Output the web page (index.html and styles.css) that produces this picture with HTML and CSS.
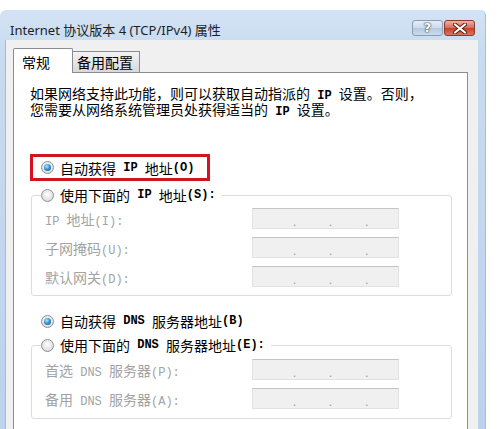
FILE: index.html
```html
<!DOCTYPE html>
<html lang="zh-CN">
  <head>
    <meta charset="UTF-8" />
    <meta name="viewport" content="width=device-width, initial-scale=1.0" />
    <title>Internet 协议版本 4 (TCP/IPv4) 属性</title>
    <link rel="stylesheet" href="styles.css">
  </head>
  <body>
    <div class="window">
      <div class="titlebar">
        <span class="title">Internet 协议版本 4 (TCP/IPv4) 属性</span>
        <div class="caption-buttons">
          <span class="cap-btn help">?</span>
          <span class="cap-btn close">
            <svg width="14" height="11" viewBox="0 0 14 11">
              <path d="M2 1.5 L12 9.5 M12 1.5 L2 9.5" stroke="#5a1c12" stroke-width="4" stroke-linecap="round" />
              <path d="M2 1.5 L12 9.5 M12 1.5 L2 9.5" stroke="#fff" stroke-width="2.2" stroke-linecap="round" />
            </svg>
          </span>
        </div>
      </div>
      <div class="client">
        <div class="tabs">
          <div class="tab active">常规</div>
          <div class="tab">备用配置</div>
        </div>
        <div class="panel">
          <p class="intro">如果网络支持此功能，则可以获取自动指派的<span class="en"> IP </span>设置。否则，<br>您需要从网络系统管理员处获得适当的<span class="en"> IP </span>设置。</p>

          <div class="highlight">
            <label class="option"><span class="radio on"></span>自动获得<span class="en"> IP </span>地址<span class="en">(O)</span></label>
          </div>
          <fieldset class="group">
            <legend class="option"><span class="radio"></span>使用下面的<span class="en"> IP </span>地址<span class="en">(S):</span></legend>
            <div class="field">
              <span><span class="en">IP </span>地址<span class="en">(I):</span></span>
              <span class="ipbox"><i>.</i><i>.</i><i>.</i></span>
            </div>
            <div class="field">
              <span>子网掩码<span class="en">(U):</span></span>
              <span class="ipbox"><i>.</i><i>.</i><i>.</i></span>
            </div>
            <div class="field">
              <span>默认网关<span class="en">(D):</span></span>
              <span class="ipbox"><i>.</i><i>.</i><i>.</i></span>
            </div>
          </fieldset>

          <label class="option dns-auto"><span class="radio on"></span>自动获得<span class="en"> DNS </span>服务器地址<span class="en">(B)</span></label>
          <fieldset class="group dns">
            <legend class="option"><span class="radio"></span>使用下面的<span class="en"> DNS </span>服务器地址<span class="en">(E):</span></legend>
            <div class="field">
              <span>首选<span class="en"> DNS </span>服务器<span class="en">(P):</span></span>
              <span class="ipbox"><i>.</i><i>.</i><i>.</i></span>
            </div>
            <div class="field">
              <span>备用<span class="en"> DNS </span>服务器<span class="en">(A):</span></span>
              <span class="ipbox"><i>.</i><i>.</i><i>.</i></span>
            </div>
          </fieldset>
        </div>
      </div>
    </div>
  </body>
</html>
```

FILE: styles.css
```css
body {
  margin: 0;
  background-color: #fff;
  font-family: "Noto Sans CJK SC", sans-serif;
}

.window {
  margin-top: 10px;
  width: 485px;
  height: 419px;
  border-right: 1px solid #7fcfea;
  border-radius: 6px 6px 0 0;
  background: linear-gradient(#d4e3f4, #c8dbf0 40px, #bcd2ed);
  display: flex;
  flex-direction: column;
  overflow: hidden;
}

.titlebar {
  height: 30px;
  flex-shrink: 0;
  display: flex;
  align-items: flex-start;
  justify-content: space-between;
  padding-left: 10px;
  padding-right: 10px;
}

.title {
  margin-top: 10px;
  line-height: 20px;
  font-family: "Noto Sans", "Noto Sans CJK SC", sans-serif;
  font-size: 13px;
  color: #1e1e1e;
}

.caption-buttons {
  display: flex;
  gap: 1px;
  margin-top: 10px;
}

.cap-btn {
  width: 31px;
  height: 16px;
  box-sizing: border-box;
  border-radius: 3px;
  display: flex;
  align-items: center;
  justify-content: center;
}

.help {
  border: 1px solid #8b9db5;
  background: linear-gradient(#e6eef8, #cbdaeb 50%, #b4c8df 51%, #cbdcef);
  color: #fff;
  font-family: "DejaVu Sans", sans-serif;
  font-size: 13px;
  font-weight: bold;
  line-height: 14px;
  text-shadow: 0 0 1px #3c4c60, 0 0 1px #3c4c60, 0 0 2px #3c4c60;
}

.close {
  border: 1px solid #8b3a2c;
  background: linear-gradient(#eeb2a6, #d86a55 50%, #c5412a 51%, #d9765f);
}

.client {
  flex: 1;
  margin-left: 5px;
  margin-right: 7px;
  border-left: 1px solid #aab9cc;
  background-color: #f0f0f0;
  padding-left: 7px;
  padding-right: 10px;
  display: flex;
  flex-direction: column;
}

.tabs {
  display: flex;
  align-items: flex-end;
  padding-top: 8px;
}

.tab {
  box-sizing: border-box;
  border: 1px solid #898c95;
  border-bottom: none;
  font-size: 14px;
  color: #000;
}

.tab.active {
  position: relative;
  width: 60px;
  height: 25px;
  margin-bottom: -1px;
  padding: 3px 0 0 8px;
  line-height: 20px;
  background-color: #fff;
  border-radius: 2px 2px 0 0;
}

.tab:not(.active) {
  width: 67px;
  height: 21px;
  border-left: none;
  padding-left: 4px;
  line-height: 21px;
  background: linear-gradient(#f3f3f3, #e5e5e5 50%, #d9d9d9);
}

.panel {
  flex: 1;
  border: 1px solid #898c95;
  border-bottom: none;
  background-color: #fff;
  padding-top: 14px;
  font-size: 14px;
  color: #000;
}

.en {
  font-family: "Liberation Mono", monospace;
  font-size: 12px;
  font-weight: bold;
  white-space: pre;
}

.field .en {
  font-weight: normal;
}

.intro {
  margin: 0 0 0 16px;
  line-height: 13px;
}

.highlight {
  width: 180px;
  height: 27px;
  box-sizing: border-box;
  margin: 35px 0 0 16px;
  border: 3px solid #d3141e;
  padding-left: 8px;
  display: flex;
  align-items: center;
}

.option {
  display: flex;
  align-items: center;
  height: 20px;
  line-height: 20px;
  white-space: nowrap;
}

.radio {
  width: 13px;
  height: 13px;
  box-sizing: border-box;
  flex-shrink: 0;
  margin-right: 6px;
  border: 1px solid #8e9092;
  border-radius: 50%;
  background: radial-gradient(circle at 50% 40%, #fdfdfd, #e4e4e4 60%, #cfcfcf);
  display: flex;
  align-items: center;
  justify-content: center;
}

.radio.on::after {
  content: "";
  width: 7px;
  height: 7px;
  border-radius: 50%;
  background: radial-gradient(circle at 40% 35%, #b7e6ff 0, #3a94d6 45%, #0f4f8e 100%);
}

.group {
  margin: 4px 15px 0 17px;
  padding: 3px 0 8px 9px;
  border: 1px solid #dcdcdc;
  border-radius: 3px;
}

.group legend {
  padding: 0 6px 0 0;
  background-color: #fff;
}

.field {
  display: grid;
  grid-template-columns: 207px 147px;
  align-items: center;
  height: 21px;
  padding-left: 4px;
  color: #a3a3a3;
  white-space: nowrap;
}

.field + .field {
  margin-top: 8px;
}

.ipbox {
  height: 21px;
  box-sizing: border-box;
  border: 1px solid #e2e2e2;
  border-top-color: #c4c4c4;
  background-color: #f0f0f0;
  display: flex;
  align-items: flex-end;
  padding-left: 40px;
  gap: 33px;
}

.ipbox i {
  font-style: normal;
  font-size: 11px;
  line-height: 14px;
  color: #9a9a9a;
}

.dns-auto {
  margin: 15px 0 0 27px;
}

.group.dns {
  padding-top: 4px;
  padding-bottom: 9px;
}
```
